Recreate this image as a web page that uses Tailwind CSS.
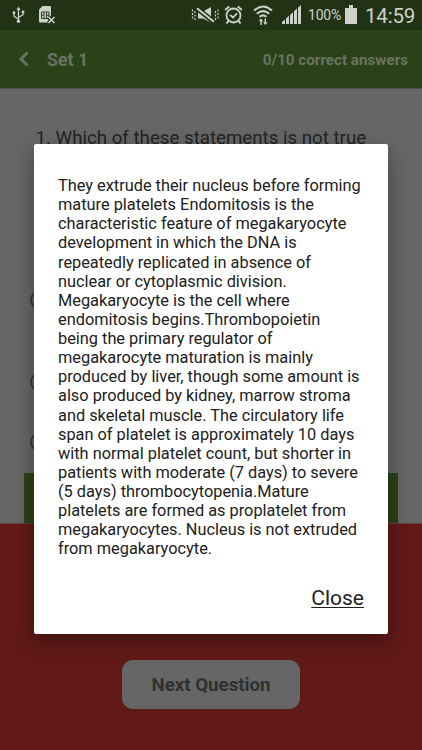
<!DOCTYPE html>
<html lang="en">
<head>
  <meta charset="UTF-8" />
  <meta name="viewport" content="width=device-width, initial-scale=1.0" />
  <title>Set 1</title>
  <script src="https://cdn.jsdelivr.net/npm/@tailwindcss/browser@4"></script>
</head>
<body class="relative w-[422px] h-[750px] overflow-hidden flex flex-col bg-[#666666] font-['Roboto',sans-serif]">

  <!-- status bar -->
  <div class="h-[30px] shrink-0 bg-[#223315] flex items-center text-[#cdd1c9]">
    <svg class="ml-3 w-[13px] h-[18px]" viewBox="0 0 13 18" fill="none" stroke="currentColor" stroke-width="1.3">
      <path d="M6.5 3v12M6.5 13.2 2 10.2V7M6.5 11.5 11 8.7V6" />
      <path d="M6.5 .8 8.6 4H4.4z" fill="currentColor" stroke="none" />
      <circle cx="6.5" cy="15.3" r="1.7" fill="currentColor" stroke="none" />
      <circle cx="2" cy="6.7" r="1.4" fill="currentColor" stroke="none" />
      <path d="M9.7 4.6h2.6v2.6H9.7z" fill="currentColor" stroke="none" />
    </svg>
    <svg class="ml-[13px] w-[18px] h-[20px]" viewBox="0 0 18 20">
      <path d="M4.500 1H12q1 0 1 1v15.500H2q-1 0-1-1V4.500z" fill="currentColor" />
      <path d="M3.500 7h7.500v6.500H3.500zM3.500 10.200h2.500M8.500 10.200H11M6 7v6.500M8.500 7v6.500" fill="none" stroke="#223315" stroke-width=".9" />
      <path d="m10.500 12 6 6m0-6-6 6" stroke="#223315" stroke-width="4" />
      <path d="m10.500 12 6 6m0-6-6 6" stroke="currentColor" stroke-width="1.600" />
    </svg>
    <svg class="ml-[135px] w-[29px] h-[18px]" viewBox="0 0 29 18" fill="none" stroke="currentColor">
      <path d="M7 5.500h5L20 1v15.500L12 12.500H7z" fill="currentColor" stroke="none" />
      <path d="m4.500 1 19 15.500" stroke="#223315" stroke-width="5" />
      <path d="m6 2.200 17 13.600" stroke-width="2" />
      <path d="M4 5v2M4 8.500v2M4 12v2M1.500 3.500v2M1.500 7v2M1.500 10.500v2M24.500 5v2M24.500 8.500v2M24.500 12v2M27 3.500v2M27 7v2M27 10.500v2" stroke-width="1.200" />
    </svg>
    <svg class="ml-[4px] w-[19px] h-[20px]" viewBox="0 0 19 20" fill="none" stroke="currentColor" stroke-width="1.800">
      <circle cx="9.500" cy="10.500" r="7" />
      <path d="m1.200 5 4-3.500M17.800 5l-4-3.500M4.500 16l-2 2.500M14.500 16l2 2.500" stroke-width="2" />
      <path d="m6 9.800 3 2.700 4-4.200" />
    </svg>
    <svg class="ml-[10px] w-[20px] h-[21px]" viewBox="0 0 20 21" fill="none" stroke="currentColor" stroke-width="2">
      <path d="M1 5.500q9-8 18 0M3.800 8.800q6.200-5.400 12.400 0M6.500 11.800q3.500-2.800 7 0" />
      <path d="M8 20v-5M12.300 13.500v5" stroke-width="1.500" />
      <path d="M5.700 16.300 8 13.500l2.300 2.800zM10 17.200l2.300 2.800 2.300-2.800z" fill="currentColor" stroke="none" />
    </svg>
    <svg class="ml-[9px] w-[19px] h-[20px]" viewBox="0 0 19 20" fill="currentColor">
      <path d="M0 19v-2l3-2.500V19zM4 19v-5.500l3-2.700V19zM8 19V10l3-2.800V19zM12 19V6.300l3-2.700V19zM16 19V2.700L19 0v19z" />
    </svg>
    <span class="ml-[7px] w-[33px] text-[14px] tracking-[-0.2px] whitespace-nowrap">100%</span>
    <svg class="ml-[4px] mb-px w-[12px] h-[19px]" viewBox="0 0 12 19" fill="currentColor">
      <path d="M4 0h4v3h4v16H0V3h4z" />
    </svg>
    <span class="ml-[8px] mt-px text-[20.500px] tracking-[-0.200px] leading-[30px] whitespace-nowrap">14:59</span>
  </div>

  <!-- header -->
  <div class="h-[58px] shrink-0 bg-[#2a4217] flex items-center text-[#6a7262] font-bold">
    <svg class="ml-[18px] w-[11px] h-[16px]" viewBox="0 0 11 16" fill="none" stroke="currentColor" stroke-width="3">
      <path d="M9.500 1.500 3 8l6.500 6.500" />
    </svg>
    <h1 class="ml-[18px] mt-[2px] text-[17.800px]">Set 1</h1>
    <span class="ml-auto mr-[14px] mt-[2px] text-[15.200px]">0/10 correct answers</span>
  </div>

  <!-- question -->
  <main class="h-[435px] shrink-0 border-t border-[#505050] flex flex-col">
    <p class="ml-[35.500px] mt-[37px] text-[18.700px] leading-[24px] text-[#222] whitespace-nowrap">1. Which of these statements is not true</p>
    <div class="ml-[30px] mt-[140px] flex flex-col">
      <span class="size-[20px] rounded-full border-2 border-[#3a3a3a]"></span>
      <span class="mt-[62px] size-[20px] rounded-full border-2 border-[#3a3a3a]"></span>
      <span class="mt-[40px] size-[20px] rounded-full border-2 border-[#3a3a3a]"></span>
    </div>
    <div class="mt-auto mx-[24px] h-[50px] bg-[#2a4217]"></div>
  </main>

  <!-- result -->
  <footer class="flex-1 bg-[#611a17] border-t border-[#66403e] flex flex-col items-center">
    <button class="mt-[136px] w-[178px] h-[49px] pt-[2px] rounded-[11px] bg-[#666666] text-[#303030] text-[18.700px] font-bold">Next Question</button>
  </footer>

  <!-- explanation dialog -->
  <div class="absolute left-[34px] top-[144px] w-[354px] h-[490px] rounded-[2px] bg-white shadow-[0_8px_20px_rgba(0,0,0,0.36)] flex flex-col text-[#212121]">
    <p class="ml-[24px] mt-[32px] text-[16.330px] leading-[19.130px] whitespace-nowrap">
      They extrude their nucleus before forming<br>
      mature platelets Endomitosis is the<br>
      characteristic feature of megakaryocyte<br>
      development in which the DNA is<br>
      repeatedly replicated in absence of<br>
      nuclear or cytoplasmic division.<br>
      Megakaryocyte is the cell where<br>
      endomitosis begins.Thrombopoietin<br>
      being the primary regulator of<br>
      megakarocyte maturation is mainly<br>
      produced by liver, though some amount is<br>
      also produced by kidney, marrow stroma<br>
      and skeletal muscle. The circulatory life<br>
      span of platelet is approximately 10 days<br>
      with normal platelet count, but shorter in<br>
      patients with moderate (7 days) to severe<br>
      (5 days) thrombocytopenia.Mature<br>
      platelets are formed as proplatelet from<br>
      megakaryocytes. Nucleus is not extruded<br>
      from megakaryocyte.
    </p>
    <button class="self-end mr-[24px] mt-[26px] text-[21px] leading-[26px] underline decoration-1 underline-offset-2">Close</button>
  </div>
</body>
</html>
